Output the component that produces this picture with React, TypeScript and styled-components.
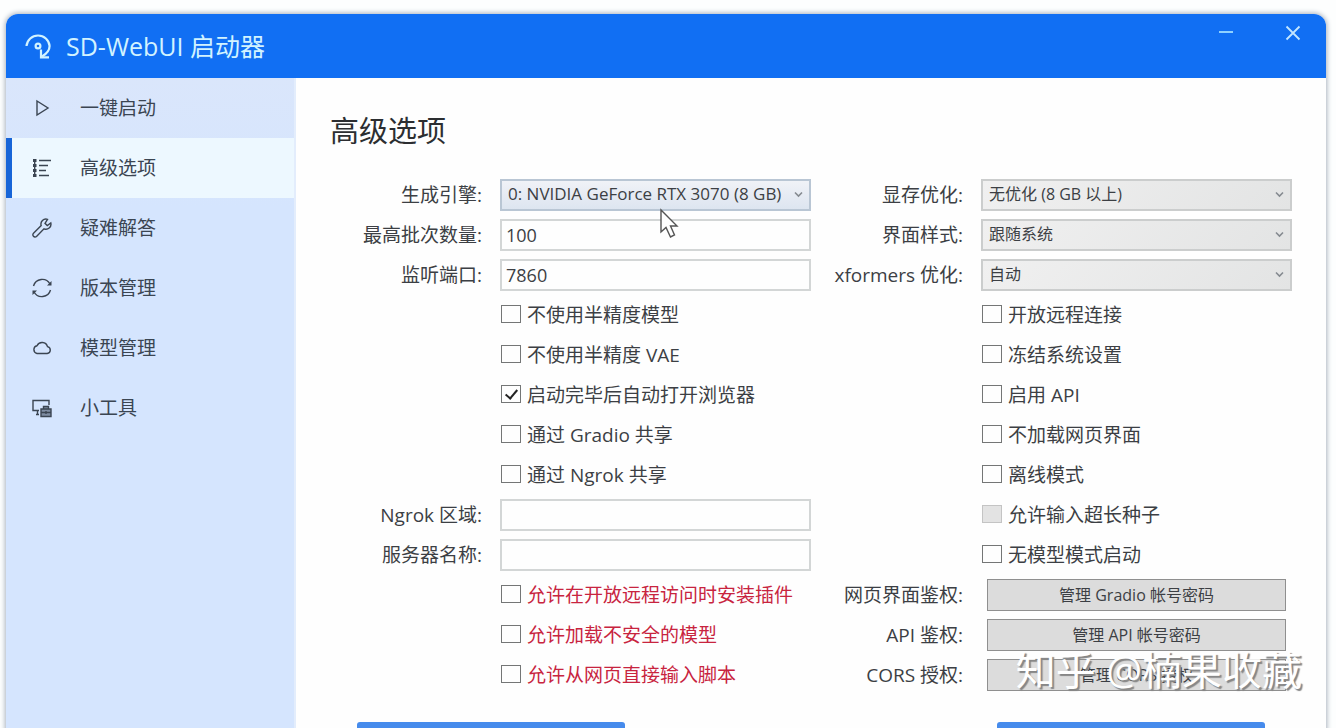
import React from "react";
import styled, { createGlobalStyle } from "styled-components";

const GlobalStyle = createGlobalStyle`
  *, *::before, *::after { box-sizing: border-box; }
  body {
    margin: 0;
    background: #fdfefe;
    color: #3c3f44;
    font-family: "Open Sans", "Noto Sans CJK SC", sans-serif;
    font-size: 19px;
    line-height: 24px;
  }
  button, input, select { font-family: inherit; color: inherit; }
`;

const Desktop = styled.div`
  position: relative;
  height: 100vh;
  overflow: hidden;
  padding: 14px 10px 0 6px;
`;

const Window = styled.div`
  display: flex;
  flex-direction: column;
  min-height: 100%;
  background: #fefefe;
  border-radius: 12px 12px 0 0;
  box-shadow: 0 0 5px 1px #a9b2be;
`;

const TitleBar = styled.header`
  display: flex;
  align-items: center;
  height: 64px;
  flex-shrink: 0;
  padding-left: 18px;
  background: #116ff3;
  color: #d2f3ff;
  border-radius: 12px 12px 0 0;
`;

const AppName = styled.span`
  flex: 1;
  margin-left: 14px;
  font-size: 25px;
  line-height: 32px;
`;

const WindowButton = styled.button`
  display: flex;
  align-items: center;
  justify-content: center;
  align-self: flex-start;
  width: 67px;
  height: 38px;
  padding: 0;
  border: 0;
  background: none;
  color: #8fd2ff;
`;

const Body = styled.div`
  display: flex;
  flex: 1;
`;

const Sidebar = styled.nav`
  flex: 0 0 290px;
  background: linear-gradient(#dae6fb, #d5e5fe 130px);
  border-right: 2px solid #e3edfc;
`;

const NavItem = styled.a<{ $active?: boolean }>`
  display: flex;
  align-items: center;
  gap: 28px;
  height: 60px;
  padding-left: 20px;
  border-left: 6px solid ${(p) => (p.$active ? "#1765d8" : "transparent")};
  background: ${(p) => (p.$active ? "#edf8ff" : "transparent")};
  color: #3b4552;
  text-decoration: none;
`;

const Content = styled.main`
  flex: 1;
  min-width: 0;
  padding: 33px 34px 0;
`;

const Heading = styled.h1`
  margin: 0 0 24px;
  font-size: 29px;
  line-height: 40px;
  font-weight: 400;
  color: #2c2e31;
`;

const Form = styled.form`
  display: grid;
  grid-template-columns: 1fr 1fr;
`;

const Column = styled.div`
  display: flex;
  flex-direction: column;
`;

const Row = styled.div`
  display: grid;
  grid-template-columns: 152px 1fr;
  column-gap: 18px;
  align-items: center;
  height: 40px;
`;

const FieldLabel = styled.label`
  grid-column: 1;
  justify-self: end;
  white-space: nowrap;
`;

const TextInput = styled.input`
  width: 100%;
  height: 32px;
  padding: 0 4px;
  border: 2px solid #d3d6d6;
  background: #fefefe;
  font-size: 18px;
`;

const SelectWrap = styled.div`
  position: relative;
`;

const Select = styled.select<{ $hot?: boolean }>`
  appearance: none;
  display: block;
  width: 100%;
  height: 32px;
  padding: 0 24px 3px 6px;
  border: 2px solid ${(p) => (p.$hot ? "#b9c6d4" : "#cbcdcd")};
  border-radius: 0;
  background: ${(p) =>
    p.$hot
      ? "linear-gradient(#f0f2f7, #dde5f0)"
      : "linear-gradient(135deg, #f0f0f0, #e3e4e4)"};
  font-size: ${(p) => (p.$hot ? "17px" : "16px")};
`;

const Chevron = styled.svg`
  position: absolute;
  right: 8px;
  top: 12px;
  pointer-events: none;
`;

const CheckLabel = styled.label<{ $danger?: boolean }>`
  grid-column: 2;
  display: flex;
  align-items: center;
  gap: 6px;
  padding-left: 1px;
  white-space: nowrap;
  color: ${(p) => (p.$danger ? "#c8243f" : "inherit")};
`;

const CheckBox = styled.input`
  appearance: none;
  display: grid;
  place-items: center;
  flex: none;
  width: 20px;
  height: 18px;
  margin: 0 0 2px;
  border: 1px solid #747676;
  background: #fefefe;
  &:disabled {
    border-color: #c4c4c4;
    background: #e3e3e3;
  }
  &:checked::before {
    content: "";
    width: 7px;
    height: 12px;
    margin-bottom: 3px;
    border: solid #222;
    border-width: 0 2px 2px 0;
    transform: rotate(40deg);
  }
`;

const ManageButton = styled.button`
  height: 32px;
  margin: 0 6px;
  padding: 0;
  border: 1px solid #8f8f8f;
  background: #dcdcdc;
  font-size: 16px;
  line-height: 24px;
`;

const Actions = styled.div`
  display: flex;
  justify-content: space-between;
  padding: 27px 27px 0;
`;

const ActionButton = styled.button`
  width: 268px;
  height: 48px;
  border: 0;
  border-radius: 3px;
  background: #468bec;
`;

const Pointer = styled.svg`
  position: absolute;
  left: 659px;
  top: 208px;
  pointer-events: none;
`;

const Watermark = styled.div`
  position: absolute;
  right: 34px;
  bottom: 34px;
  font-size: 40px;
  line-height: 48px;
  white-space: nowrap;
  color: #fff;
  text-shadow: 2px 2px 1px #868686;
  pointer-events: none;
`;

const icon = {
  width: 20,
  height: 20,
  viewBox: "0 0 20 20",
  fill: "none",
  stroke: "currentColor",
  strokeWidth: 1.4,
  "aria-hidden": true,
} as const;

const PlayIcon = () => (
  <svg {...icon}>
    <path d="M5 3 16 10 5 17Z" />
  </svg>
);
const ListIcon = () => (
  <svg {...icon}>
    <path d="M7 2.500H19M7 7.500H16M7 12.500H14M7 17.500H17" />
    <path d="M1 2.500H4.500M1 7.500H4.500M1 12.500H4.500M1 17.500H4.500" strokeWidth={2.8} />
    <path d="M2.700 1V19" strokeWidth={1.4} />
  </svg>
);
const WrenchIcon = () => (
  <svg {...icon}>
    <path d="M15.500 1.300A5 5 0 0 0 9.200 7.600L1.500 15.300A2 2 0 0 0 4.500 18.400L12 10.800A5 5 0 0 0 18.800 5L15.300 7.500 13 5.300Z" />
  </svg>
);
const SyncIcon = () => (
  <svg {...icon}>
    <path d="M1.500 8A9 9 0 0 1 18 6M18.500 12A9 9 0 0 1 2 14" />
    <path d="M19.500 3V7.500H15ZM.5 17V12.500H5Z" fill="currentColor" stroke="none" />
  </svg>
);
const CloudIcon = () => (
  <svg {...icon}>
    <path d="M5 15.500H15.200A3.500 3.500 0 0 0 15.500 8.600A5.600 5.600 0 0 0 5 7.700A4 4 0 0 0 5 15.500Z" />
  </svg>
);
const ToolsIcon = () => (
  <svg {...icon}>
    <path d="M7 12.500H1V2.500H17V7M4 16.500H7M5.500 13V16" />
    <path d="M9 11H19V18.500H9ZM11.500 11V8.500H16.500V11" fill="#7f8da3" />
    <path d="M9 14.500H19M14 13V16" />
  </svg>
);

const navItems = [
  { text: "一键启动", Icon: PlayIcon },
  { text: "高级选项", Icon: ListIcon, active: true },
  { text: "疑难解答", Icon: WrenchIcon },
  { text: "版本管理", Icon: SyncIcon },
  { text: "模型管理", Icon: CloudIcon },
  { text: "小工具", Icon: ToolsIcon },
];

function SelectRow({ id, label, value, hot }: { id: string; label: string; value: string; hot?: boolean }) {
  return (
    <Row>
      <FieldLabel htmlFor={id}>{label}</FieldLabel>
      <SelectWrap>
        <Select id={id} $hot={hot}>
          <option>{value}</option>
        </Select>
        <Chevron width="9" height="7" viewBox="0 0 9 7" fill="none" stroke="#858a90" strokeWidth="1.6">
          <path d="M1 1.500 4.500 5 8 1.500" />
        </Chevron>
      </SelectWrap>
    </Row>
  );
}

function TextRow({ id, label, value }: { id: string; label: string; value?: string }) {
  return (
    <Row>
      <FieldLabel htmlFor={id}>{label}</FieldLabel>
      <TextInput id={id} type="text" defaultValue={value} />
    </Row>
  );
}

function CheckRow({ label, checked, disabled, danger }: { label: string; checked?: boolean; disabled?: boolean; danger?: boolean }) {
  return (
    <Row>
      <CheckLabel $danger={danger}>
        <CheckBox type="checkbox" defaultChecked={checked} disabled={disabled} />
        {label}
      </CheckLabel>
    </Row>
  );
}

function ButtonRow({ id, label, text }: { id: string; label: string; text: string }) {
  return (
    <Row>
      <FieldLabel htmlFor={id}>{label}</FieldLabel>
      <ManageButton id={id} type="button">{text}</ManageButton>
    </Row>
  );
}

export default function App() {
  return (
    <Desktop>
      <GlobalStyle />
      <Window>
        <TitleBar>
          <svg width="28" height="28" viewBox="0 0 28 28" fill="none" stroke="currentColor" strokeWidth="2.2" aria-hidden="true">
            <path d="M2.500 14A11.600 11.600 0 0 1 25.600 14Q25.600 20 18 24.500" />
            <path d="M17 17.500V25.300H25" />
            <circle cx="14" cy="14" r="2.400" />
          </svg>
          <AppName>SD-WebUI 启动器</AppName>
          <WindowButton type="button" aria-label="最小化">
            <svg width="16" height="16" viewBox="0 0 16 16" stroke="currentColor" strokeWidth="2">
              <path d="M1 7H15" />
            </svg>
          </WindowButton>
          <WindowButton type="button" aria-label="关闭">
            <svg width="16" height="16" viewBox="0 0 16 16" stroke="#c3e6ff" strokeWidth="1.8">
              <path d="M1.500 1.500 14.500 14.500M14.500 1.500 1.500 14.500" />
            </svg>
          </WindowButton>
        </TitleBar>
        <Body>
          <Sidebar>
            {navItems.map(({ text, Icon, active }) => (
              <NavItem key={text} href="#" $active={active}>
                <Icon />
                {text}
              </NavItem>
            ))}
          </Sidebar>
          <Content>
            <Heading>高级选项</Heading>
            <Form>
              <Column>
                <SelectRow id="engine" label="生成引擎:" value="0: NVIDIA GeForce RTX 3070 (8 GB)" hot />
                <TextRow id="batch" label="最高批次数量:" value="100" />
                <TextRow id="port" label="监听端口:" value="7860" />
                <CheckRow label="不使用半精度模型" />
                <CheckRow label="不使用半精度 VAE" />
                <CheckRow label="启动完毕后自动打开浏览器" checked />
                <CheckRow label="通过 Gradio 共享" />
                <CheckRow label="通过 Ngrok 共享" />
                <TextRow id="region" label="Ngrok 区域:" />
                <TextRow id="server" label="服务器名称:" />
                <CheckRow label="允许在开放远程访问时安装插件" danger />
                <CheckRow label="允许加载不安全的模型" danger />
                <CheckRow label="允许从网页直接输入脚本" danger />
              </Column>
              <Column>
                <SelectRow id="vram" label="显存优化:" value="无优化 (8 GB 以上)" />
                <SelectRow id="theme" label="界面样式:" value="跟随系统" />
                <SelectRow id="xformers" label="xformers 优化:" value="自动" />
                <CheckRow label="开放远程连接" />
                <CheckRow label="冻结系统设置" />
                <CheckRow label="启用 API" />
                <CheckRow label="不加载网页界面" />
                <CheckRow label="离线模式" />
                <CheckRow label="允许输入超长种子" disabled />
                <CheckRow label="无模型模式启动" />
                <ButtonRow id="web-auth" label="网页界面鉴权:" text="管理 Gradio 帐号密码" />
                <ButtonRow id="api-auth" label="API 鉴权:" text="管理 API 帐号密码" />
                <ButtonRow id="cors" label="CORS 授权:" text="管理 CORS 授权" />
              </Column>
            </Form>
            <Actions>
              <ActionButton type="button" aria-label="恢复默认设置" />
              <ActionButton type="button" aria-label="保存设置" />
            </Actions>
          </Content>
        </Body>
      </Window>
      <Pointer width="20" height="32" viewBox="0 0 20 32" fill="#fff" stroke="#555" strokeWidth="1.4">
        <path d="M2 2V24L7 19.500 11.500 29 15.500 27 11.500 18H18Z" />
      </Pointer>
      <Watermark>知乎 @楠果收藏</Watermark>
    </Desktop>
  );
}
